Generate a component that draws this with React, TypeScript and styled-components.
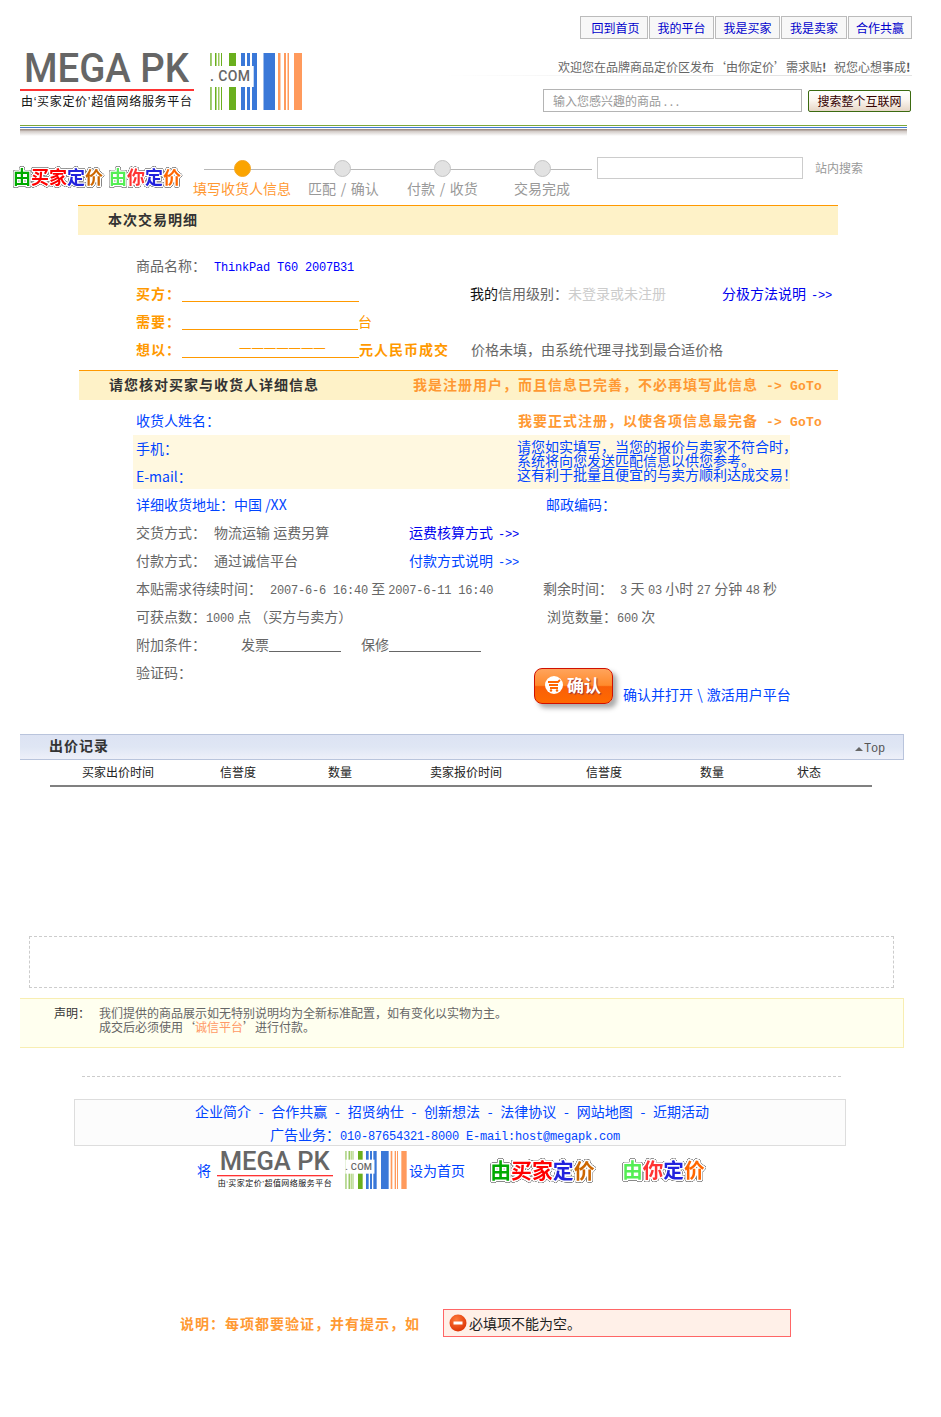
import React from "react";
import styled, { createGlobalStyle } from "styled-components";

const Global = createGlobalStyle`
  html, body { margin: 0; padding: 0; background: #fff; }
  body { font-family: "Noto Sans CJK SC", "Liberation Sans", sans-serif; font-size: 14px; color: #666; }
  a { color: inherit; text-decoration: none; }
`;

const Page = styled.div`width: 941px; min-height: 1417px; overflow: hidden;`;

const Nav = styled.nav`display: flex; justify-content: flex-end; gap: 1px; padding: 16px 29px 0 0;`;
const NavTab = styled.a<{ $w: number; $indent?: number }>`
  width: ${p => p.$w}px; height: 23px; box-sizing: border-box; border: 1px solid #bbb; background: #f7f7f7;
  color: #00c; font-size: 12px; line-height: 22px; text-align: center; padding-left: ${p => p.$indent || 0}px;
`;

const Header = styled.header`display: flex; margin-top: 14px; padding-left: 20px; height: 57px;`;
const LogoGroup = styled.div`display: flex; gap: 16px;`;
const HeaderRight = styled.div`margin-left: auto; width: 466px; margin-right: 30px;`;
const Welcome = styled.div`
  display: flex; justify-content: flex-end; height: 23px; box-sizing: border-box; padding-top: 7px; font-size: 12px; line-height: 14px; color: #666;
  white-space: nowrap; margin-right: -1px;
  background: linear-gradient(to right, #fff, #e4e4e4 70%) bottom / 100% 1px no-repeat;
`;
const Bang = styled.span<{ $w: number }>`width: ${p => p.$w}px; font-weight: 700; color: #555;`;
const SearchRow = styled.div`display: flex; justify-content: flex-end; gap: 6px; margin-top: 13px;`;
const SearchInput = styled.input`
  width: 259px; height: 23px; box-sizing: border-box; border: 1px solid #b4b4b4; padding: 0 9px; font: 12px/21px "Noto Sans CJK SC", sans-serif;
  &::placeholder { color: #999; opacity: 1; }
`;
const SearchButton = styled.button`
  width: 103px; height: 22px; margin-top: 1px; box-sizing: border-box; border: 1px solid #3b6a10; border-radius: 2px; padding: 0;
  background: linear-gradient(#fff, #fbf6f0 45%, #e6d6c6); color: #300; font: 12px/20px "Noto Sans CJK SC", sans-serif;
`;

const Rule = styled.div`
  margin: 15px 0 0 20px; width: 887px; height: 11px;
  background: linear-gradient(to bottom, #7ca83a 0 1px, #fff 1px 2px, #3f7ad0 2px 3px, #fff 3px 4px, #a09088 4px 5px, #cfc8c4 6px, #fff 11px);
`;

const StepBar = styled.div`display: flex; align-items: flex-start; height: 48px; padding: 21px 0 0 12px;`;
const Badges = styled.div`display: flex; gap: 3px; margin-top: 8px;`;
const Steps = styled.div`width: 400px; margin: 3px 0 0 9px;`;
const Track = styled.div`
  display: flex; gap: 83px; height: 17px; margin-left: 11px; padding-left: 30px; width: 358px;
  background: linear-gradient(#b8b8b8, #b8b8b8) 0 9px / 100% 1px no-repeat;
`;
const Dot = styled.span<{ $on?: boolean }>`
  width: 17px; height: 17px; border-radius: 50%; box-sizing: border-box;
  border: 1px solid ${p => (p.$on ? "#f5a623" : "#c4c4c4")}; background: ${p => (p.$on ? "#fba400" : "#e2e2e2")};
`;
const StepLabels = styled.div`display: flex; margin-top: 3px; line-height: 16px; white-space: nowrap; word-spacing: 1.5px;`;
const StepLabel = styled.span<{ $w: number; $on?: boolean }>`width: ${p => p.$w}px; flex: none; color: ${p => (p.$on ? "#f93" : "#999")};`;
const SiteSearch = styled.div`display: flex; gap: 12px; margin: 0 0 0 4px;`;
const SiteInput = styled.input`width: 206px; height: 22px; box-sizing: border-box; border: 1px solid #ccc;`;
const SiteLabel = styled.span`font-size: 12px; line-height: 21px; color: #999;`;

const Panel = styled.section`margin-left: 78px; width: 760px;`;
const SectionHead = styled.div<{ $gap?: number; $shift?: number }>`
  display: flex; height: 30px; box-sizing: border-box; border-top: 1px solid #f90; background: #fef2c8;
  padding-left: 30px; margin-left: ${p => p.$shift || 0}px; margin-top: ${p => p.$gap || 0}px;
  line-height: 26px; color: #333; font-weight: 700; letter-spacing: 1px; white-space: nowrap;
`;
const Rows = styled.div<{ $top?: number; $lh: number }>`padding: ${p => p.$top || 0}px 0 0 58px; line-height: ${p => p.$lh}px;`;
const Row = styled.div<{ $h?: number }>`
  display: flex; height: ${p => p.$h || 28}px; white-space: nowrap;
`;
const Cell = styled.span<{ $w?: number; $c?: string; $b?: boolean }>`
  ${p => (p.$w ? `width: ${p.$w}px; flex: none;` : "")}
  ${p => (p.$c ? `color: ${p.$c};` : "")}
  ${p => (p.$b ? "font-weight: 700; letter-spacing: 1px;" : "")}
`;
const Countdown = styled.span`word-spacing: .3px;`;
const Latin = styled.span`font-family: "Liberation Mono", monospace; font-size: 12px; letter-spacing: -.2px; font-weight: 400;`;
const GoTo = styled.span`font-family: "Liberation Mono", monospace; font-size: 13px; letter-spacing: .2px; font-weight: 700; margin-left: 8px;`;
const Arrow = styled(Latin)`margin-left: 5px;`;
const Blank = styled.span<{ $w: number; $c?: string; $inset?: number }>`
  display: inline-block; width: ${p => p.$w}px; vertical-align: top; padding-left: ${p => p.$inset || 0}px; line-height: 24px;
  border-bottom: 1px solid ${p => p.$c || "#f90"}; color: #f90; box-sizing: border-box; height: 21px; font-size: 12.4px; font-weight: 400; letter-spacing: 0;
`;
const Tinted = styled.div`
  display: flex; width: 657px; height: 54px; margin: 0 0 2px -3px; padding-left: 3px; box-sizing: border-box; background: #fff8e0;
`;
const TintedLeft = styled.div`width: 381px; flex: none; color: #04f;`;
const TintedLine = styled.div`height: 28px;`;
const Advice = styled.div`padding-top: 4px; color: #04f; line-height: 14px; white-space: nowrap;`;
const Confirm = styled.button`
  display: flex; align-items: center; gap: 4px; width: 79px; height: 36px; margin: 9px 10px 0 0; padding: 0 0 3px 10px; box-sizing: border-box;
  border: 1px solid #d01000; border-radius: 8px; box-shadow: 4px 4px 5px #aaa;
  background: linear-gradient(#ffa45c 0, #ff8a2c 48%, #f95f08 52%, #ff6a00 100%);
  color: #fff; font: 700 17px/1 "Noto Sans CJK SC", sans-serif; text-shadow: 1px 1px 1px #933;
`;
const ConfirmLink = styled.a`margin-top: 22px; color: #04f; word-spacing: 1px;`;

const BidBar = styled.div`
  display: flex; align-items: center; justify-content: space-between; width: 884px; height: 26px; box-sizing: border-box;
  margin: 0 0 0 20px; padding: 0 18px 5px 29px; border: 1px solid #b9c4dc; border-width: 1px 1px 1px 0;
  background: linear-gradient(#dde3f3, #dfe6f4 50%, #eef0f9); color: #333; font-weight: 700; letter-spacing: 1px;
`;
const TopLink = styled.a`display: flex; align-items: center; gap: 1px; margin-top: 8px; color: #555; letter-spacing: 0;`;
const Caret = styled.span`width: 0; height: 0; border: 4px solid transparent; border-top: 0; border-bottom: 4px solid #666;`;
const BidHead = styled.div`
  display: flex; height: 27px; box-sizing: border-box; margin-left: 50px; padding-left: 32px; width: 822px;
  border-bottom: 2px solid #808080; color: #222; font-size: 12px; line-height: 24px;
`;
const Placeholder = styled.div`
  width: 865px; height: 52px; margin: 149px 0 0 29px; box-sizing: border-box; border: 1px dashed #ccc;
`;
const Notice = styled.div`
  display: flex; width: 884px; height: 50px; margin: 10px 0 0 20px; padding: 7px 0 0 34px; box-sizing: border-box;
  background: #ffffef; border: 1px solid #f8eeb2; border-left: 0; font-size: 12px; line-height: 14px;
`;
const NoticeTitle = styled.span`width: 45px; color: #333;`;
const NoticeText = styled.div`color: #666;`;
const Accent = styled.span`color: #f96;`;
const Divider = styled.div`width: 759px; margin: 28px 0 0 82px; border-top: 1px dashed #ccc;`;
const FooterBox = styled.div`
  width: 772px; height: 47px; margin: 22px 0 0 74px; box-sizing: border-box; border: 1px solid #ddd; background: #fcfcfc;
  text-align: center; color: #04f; line-height: 23px; white-space: nowrap;
`;
const FootLine = styled.div<{ $pr: number; $ws?: number }>`padding-right: ${p => p.$pr}px; word-spacing: ${p => p.$ws || 0}px;`;
const FootRow = styled.div`display: flex; align-items: center; margin: 4px 0 0 197px; height: 40px; color: #04f;`;
const FootMark = styled.a`margin-right: 6px;`;
const FootHome = styled.a`margin: 0 24px 0 2px;`;
const FootBadge = styled.span`display: block; margin-right: 24px;`;
const FootLogo = styled.span`display: flex; gap: 12px;`;
const Status = styled.div`display: flex; align-items: center; margin: 119px 0 0 180px;`;
const StatusNote = styled.span`width: 263px; flex: none; color: #f93; font-weight: 700; letter-spacing: 1px;`;
const ErrorBox = styled.div`
  display: flex; align-items: center; gap: 2px; width: 348px; height: 28px; box-sizing: border-box; padding-left: 5px;
  border: 1px solid #f66; background: #fff0e8; color: #222;
`;
const SvgBlock = styled.svg`display: block; overflow: visible;`;
const BadgeLabel = styled.text`
  font: 700 18px "Noto Sans CJK SC", sans-serif; paint-order: stroke; stroke: #fff; stroke-width: 3px; stroke-linejoin: round;
  filter: drop-shadow(0 0 .5px #000) drop-shadow(0 0 .5px #000);
`;

const Logo = ({ w, h }: { w: number; h: number }) => (
  <SvgBlock width={w} height={h} viewBox="0 0 174 57">
    <text x="4" y="29" textLength="165" lengthAdjust="spacingAndGlyphs" fontFamily="Roboto" fontWeight="500" fontSize="40" fill="#666">MEGA PK</text>
    <rect x="0" y="36" width="174" height="2" fill="#f33" />
    <text x="1" y="53" textLength="171" fontFamily="Noto Sans CJK SC" fontSize="12" fill="#111">
      由<tspan fontFamily="Liberation Sans">‘</tspan>买家定价<tspan fontFamily="Liberation Sans">’</tspan>超值网络服务平台
    </text>
  </SvgBlock>
);

const bars: [number, number, string][] = [
  [0.3, 1.3, "#6aaf1e"], [5, 1.5, "#6aaf1e"], [8, 1.5, "#9cc95c"], [11, 1, "#6aaf1e"], [19, 7, "#6aaf1e"],
  [31, 4, "#3a78d8"], [37, 3, "#3a78d8"], [42, 5, "#3a78d8"], [53.5, 11.5, "#3a78d8"],
  [68, 2.5, "#ff9a5c"], [74, 2, "#ff9a5c"], [77.5, 1.5, "#ff9a5c"], [84, 8, "#ff9a5c"],
];

const Barcode = ({ w, h }: { w: number; h: number }) => (
  <SvgBlock width={w} height={h} viewBox="0 0 92 57">
    {bars.map(([x, bw, c]) => <rect key={x} x={x} y="0" width={bw} height="57" fill={c} />)}
    <rect x="0" y="13" width="43.7" height="21" fill="#fff" />
    <text x="0" y="28" textLength="40" lengthAdjust="spacing" fontFamily="Roboto" fontWeight="500" fontSize="14" fill="#666">. COM</text>
  </SvgBlock>
);

type Part = [string, string];
const buyer: Part[] = [["由", "#0a0"], ["买家", "#f00"], ["定", "#22d"], ["价", "#c60"]];
const you: Part[] = [["由", "#5e5"], ["你", "#f33"], ["定", "#22d"], ["价", "#f60"]];

const Badge = ({ parts, w, h, vw }: { parts: Part[]; w: number; h: number; vw: number }) => (
  <SvgBlock width={w} height={h} viewBox={`0 0 ${vw} 25`}>
    <BadgeLabel x="1" y="19">
      {parts.map(([t, c]) => <tspan key={t} fill={c}>{t}</tspan>)}
    </BadgeLabel>
  </SvgBlock>
);

const Cart = () => (
  <svg width="18" height="18" viewBox="0 0 18 18">
    <circle cx="9" cy="9" r="9" fill="#fff" />
    <path d="M3 6h10l2-2M4 9h9M5 12h8" stroke="#f60" strokeWidth="1.8" fill="none" />
    <circle cx="6" cy="14.5" r="1.2" fill="#f60" /><circle cx="12" cy="14.5" r="1.2" fill="#f60" />
  </svg>
);

const StopIcon = () => (
  <svg width="18" height="20" viewBox="0 0 18 20">
    <defs>
      <radialGradient id="stop" cx=".4" cy=".3" r=".8"><stop offset="0" stopColor="#ff7a3a" /><stop offset="1" stopColor="#d82c00" /></radialGradient>
    </defs>
    <circle cx="9" cy="10" r="8.5" fill="url(#stop)" />
    <rect x="4.5" y="8.5" width="9" height="3" fill="#fff" />
  </svg>
);

const navItems: [string, number, number][] = [["回到首页", 68, 3], ["我的平台", 65, 0], ["我是买家", 65, 0], ["我是卖家", 66, 0], ["合作共赢", 64, 0]];
const stepItems: [string, number][] = [["填写收货人信息", 115], ["匹配 / 确认", 99], ["付款 / 收货", 107], ["交易完成", 60]];
const bidCols: [string, number][] = [["买家出价时间", 138], ["信誉度", 108], ["数量", 102], ["卖家报价时间", 156], ["信誉度", 114], ["数量", 97], ["状态", 60]];
const orange = "#f93";
const blue = "#04f";

export default function App() {
  return (
    <Page>
      <Global />
      <Nav>{navItems.map(([t, w, i]) => <NavTab key={t} $w={w} $indent={i}>{t}</NavTab>)}</Nav>
      <Header>
        <LogoGroup><Logo w={174} h={57} /><Barcode w={92} h={57} /></LogoGroup>
        <HeaderRight>
          <Welcome>欢迎您在品牌商品定价区发布‘由你定价’需求贴<Bang $w={12}>!</Bang>祝您心想事成<Bang $w={6}>!</Bang></Welcome>
          <SearchRow>
            <SearchInput placeholder="输入您感兴趣的商品 . . ." />
            <SearchButton>搜索整个互联网</SearchButton>
          </SearchRow>
        </HeaderRight>
      </Header>
      <Rule />
      <StepBar>
        <Badges>
          <Badge parts={buyer} w={93} h={25} vw={93} />
          <Badge parts={you} w={76} h={25} vw={76} />
        </Badges>
        <Steps>
          <Track><Dot $on /><Dot /><Dot /><Dot /></Track>
          <StepLabels>{stepItems.map(([t, w], i) => <StepLabel key={t} $w={w} $on={i === 0}>{t}</StepLabel>)}</StepLabels>
        </Steps>
        <SiteSearch><SiteInput /><SiteLabel>站内搜索</SiteLabel></SiteSearch>
      </StepBar>
      <Panel>
        <SectionHead>本次交易明细</SectionHead>
        <Rows $top={18} $lh={25}>
          <Row><Cell $w={78}>商品名称：</Cell><Cell $c="#00f"><Latin>ThinkPad T60 2007B31</Latin></Cell></Row>
          <Row>
            <Cell $w={46} $c="#f90" $b>买方：</Cell>
            <Cell $w={288}><Blank $w={177} /></Cell>
            <Cell $w={252}><Cell $c="#111">我的</Cell>信用级别：<Cell $c="#ccc">未登录或未注册</Cell></Cell>
            <Cell $c="#00e">分极方法说明<Arrow>-&gt;&gt;</Arrow></Cell>
          </Row>
          <Row><Cell $w={46} $c="#f90" $b>需要：</Cell><Cell $c="#f90"><Blank $w={176} />台</Cell></Row>
          <Row>
            <Cell $w={46} $c="#f90" $b>想以：</Cell>
            <Cell $w={289} $c="#f90" $b><Blank $w={177} $inset={57}>一一一一一一一</Blank>元人民币成交</Cell>
            <Cell>价格未填，由系统代理寻找到最合适价格</Cell>
          </Row>
        </Rows>
        <SectionHead $gap={5} $shift={1}>
          <Cell $w={304}>请您核对买家与收货人详细信息</Cell>
          <Cell $c={orange}>我是注册用户，而且信息已完善，不必再填写此信息<GoTo>-&gt; GoTo</GoTo></Cell>
        </SectionHead>
        <Rows $top={7} $lh={27}>
          <Row>
            <Cell $w={382} $c={blue}>收货人姓名：</Cell>
            <Cell $c={orange} $b>我要正式注册，以使各项信息最完备<GoTo>-&gt; GoTo</GoTo></Cell>
          </Row>
          <Tinted>
            <TintedLeft><TintedLine>手机：</TintedLine><TintedLine>E-mail：</TintedLine></TintedLeft>
            <Advice>请您如实填写，当您的报价与卖家不符合时，<br />系统将向您发送匹配信息以供您参考。<br />这有利于批量且便宜的与卖方顺利达成交易！</Advice>
          </Tinted>
          <Row><Cell $w={410} $c={blue}>详细收货地址：中国 /XX</Cell><Cell $c={blue}>邮政编码：</Cell></Row>
          <Row><Cell $w={78}>交货方式：</Cell><Cell $w={195}>物流运输 运费另算</Cell><Cell $c="#00e">运费核算方式<Arrow>-&gt;&gt;</Arrow></Cell></Row>
          <Row><Cell $w={78}>付款方式：</Cell><Cell $w={195}>通过诚信平台</Cell><Cell $c={blue}>付款方式说明<Arrow>-&gt;&gt;</Arrow></Cell></Row>
          <Row>
            <Cell $w={134}>本贴需求待续时间：</Cell>
            <Cell $w={273}><Latin>2007-6-6 16:40</Latin> 至 <Latin>2007-6-11 16:40</Latin></Cell>
            <Cell $w={77}>剩余时间：</Cell>
            <Countdown><Latin>3</Latin> 天 <Latin>03</Latin> 小时 <Latin>27</Latin> 分钟 <Latin>48</Latin> 秒</Countdown>
          </Row>
          <Row>
            <Cell $w={411}>可获点数：<Latin>1000</Latin> 点 （买方与卖方）</Cell>
            <Cell>浏览数量：<Latin>600</Latin> 次</Cell>
          </Row>
          <Row>
            <Cell $w={105}>附加条件：</Cell>
            <Cell $w={120}>发票<Blank $w={72} $c="#666" /></Cell>
            <Cell>保修<Blank $w={92} $c="#666" /></Cell>
          </Row>
          <Row $h={75}>
            <Cell $w={398}>验证码：</Cell>
            <Confirm><Cart />确认</Confirm>
            <ConfirmLink>确认并打开 \ 激活用户平台</ConfirmLink>
          </Row>
        </Rows>
      </Panel>
      <BidBar>出价记录<TopLink><Caret /><Latin>Top</Latin></TopLink></BidBar>
      <BidHead>{bidCols.map(([t, w], i) => <Cell key={i} $w={w}>{t}</Cell>)}</BidHead>
      <Placeholder />
      <Notice>
        <NoticeTitle>声明：</NoticeTitle>
        <NoticeText>我们提供的商品展示如无特别说明均为全新标准配置，如有变化以实物为主。<br />成交后必须使用‘<Accent>诚信平台</Accent>’进行付款。</NoticeText>
      </Notice>
      <Divider />
      <FooterBox>
        <FootLine $pr={16} $ws={4.6}>企业简介 - 合作共赢 - 招贤纳仕 - 创新想法 - 法律协议 - 网站地图 - 近期活动</FootLine>
        <FootLine $pr={30}>广告业务：<Latin>010-87654321-8000 E-mail:host@megapk.com</Latin></FootLine>
      </FooterBox>
      <FootRow>
        <FootMark>将</FootMark>
        <FootLogo><Logo w={116} h={38} /><Barcode w={62} h={38} /></FootLogo>
        <FootHome>设为首页</FootHome>
        <FootBadge><Badge parts={buyer} w={108} h={29} vw={93} /></FootBadge>
        <FootBadge><Badge parts={you} w={87} h={29} vw={76} /></FootBadge>
      </FootRow>
      <Status>
        <StatusNote>说明：每项都要验证，并有提示，如</StatusNote>
        <ErrorBox><StopIcon />必填项不能为空。</ErrorBox>
      </Status>
    </Page>
  );
}
